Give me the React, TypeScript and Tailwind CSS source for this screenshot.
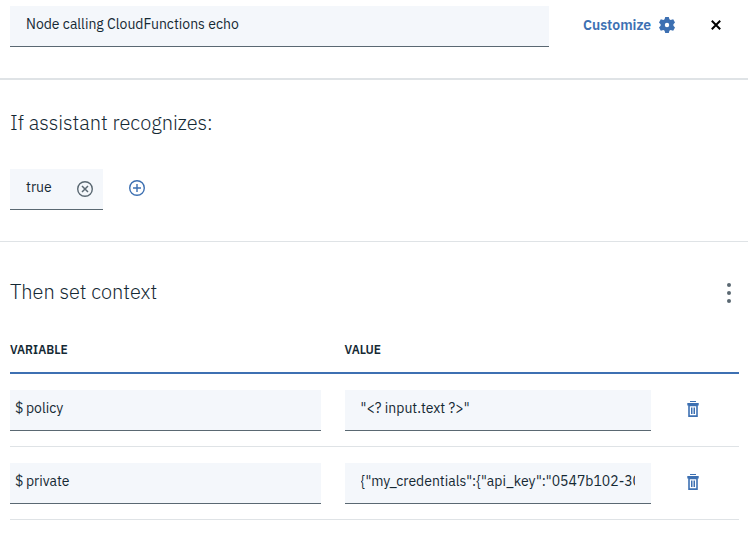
import React from "react";

const Gear = () => (
  <svg width="16" height="16" viewBox="0 0 16 16" fill="#3d70b2" className="shrink-0">
    <path
      fillRule="evenodd"
      d="M6.2 0h3.6l.6 2.3 1.2.7 2.6-.7 1.8 3.3-1.6 1.6v1.6l1.6 1.6-1.8 3.3-2.6-.7-1.2.7L9.8 16H6.2l-.6-2.3-1.2-.7-2.6.7L0 10.4l1.6-1.6V7.2L0 5.6l1.8-3.3 2.6.7 1.2-.7zM8 5.8a2.2 2.2 0 1 0 0 4.4 2.2 2.2 0 0 0 0-4.4z"
    />
  </svg>
);

const Close = () => (
  <svg width="10" height="10" viewBox="0 0 10 10" stroke="#000" strokeWidth="2" className="shrink-0">
    <path d="M.8.8l8.4 8.4M9.2.8L.8 9.2" />
  </svg>
);

const Remove = () => (
  <svg width="16" height="16" viewBox="0 0 16 16" fill="none" stroke="#5a6872" className="shrink-0">
    <circle cx="8" cy="8" r="7.3" strokeWidth="1.4" />
    <path d="M5 5l6 6M11 5l-6 6" strokeWidth="1.5" />
  </svg>
);

const Add = () => (
  <svg width="16" height="16" viewBox="0 0 16 16" fill="none" stroke="#3d70b2" className="shrink-0">
    <circle cx="8" cy="8" r="7.3" strokeWidth="1.4" />
    <path d="M8 4v8M4 8h8" strokeWidth="1.4" />
  </svg>
);

const Trash = () => (
  <svg width="12" height="16" viewBox="0 0 12 16" fill="#3d70b2" className="shrink-0">
    <path d="M3 0h6v1H3zM.3 2h11.4v2.4H.3z" />
    <path fillRule="evenodd" d="M1.2 4h9.6v12H1.2zM2.8 5.2v9h6.4v-9z" />
    <path d="M4 6.5h1.5v6.6H4zM6.5 6.5H8v6.6H6.5z" />
  </svg>
);

const Kebab = () => (
  <svg width="4" height="20" viewBox="0 0 4 20" fill="#5a6872" className="shrink-0">
    <circle cx="2" cy="2" r="2" />
    <circle cx="2" cy="10" r="2" />
    <circle cx="2" cy="18" r="2" />
  </svg>
);

const rows = [
  { name: "policy", value: '"<? input.text ?>"' },
  { name: "private", value: '{"my_credentials":{"api_key":"0547b102-30' },
];

export default function App() {
  return (
    <main className="h-[538px] w-[748px] overflow-hidden bg-white font-['IBM_Plex_Sans','Roboto','Liberation_Sans',sans-serif] text-sm leading-5 text-[#152934]">
      <header className="flex h-20 items-start border-b-2 border-[#dfe3e6] pt-1.5 pl-[10px]">
        <div className="flex h-[41px] w-[539px] items-center border-b border-[#5a6872] bg-[#f4f7fb] pb-1 pl-4">
          <span>Node calling CloudFunctions echo</span>
        </div>
        <button className="ml-[34px] flex h-[38px] w-[92px] items-center justify-between font-semibold text-[#3d70b2]">
          <span>Customize</span>
          <Gear />
        </button>
        <button className="ml-9 flex h-[38px] items-center">
          <Close />
        </button>
      </header>

      <section className="h-[162px] border-b border-[#dfe3e6] pt-[29px] pl-[10px]">
        <h2 className="h-7 text-xl leading-7 font-light">
          <span>If assistant recognizes:</span>
        </h2>
        <div className="mt-8 flex">
          <div className="flex h-[41px] w-[93px] items-center justify-between border-b border-[#5a6872] bg-[#f4f7fb] pr-[10px] pl-4">
            <span className="-mt-1">true</span>
            <Remove />
          </div>
          <button className="ml-[26px] flex h-[38px] items-center">
            <Add />
          </button>
        </div>
      </section>

      <section className="pt-9 pr-[9px] pl-[10px]">
        <div className="flex h-[30px] items-center justify-between pr-2">
          <h2 className="-mt-0.5 text-xl leading-7 font-light">
            <span>Then set context</span>
          </h2>
          <Kebab />
        </div>
        <div className="mt-8 flex h-[34px] border-b-2 border-[#3d70b2] text-xs leading-[19px] font-semibold">
          <div className="w-[334.6px]"><span>VARIABLE</span></div>
          <div><span>VALUE</span></div>
        </div>
        {rows.map((row) => (
          <div key={row.name} className="flex h-[73px] items-start border-b border-[#dfe3e6] pt-4">
            <div className="flex h-[41px] w-[311px] items-center border-b border-[#5a6872] bg-[#f4f7fb] pb-1 pl-[5px]">
              <span className="w-[11px]">$</span>
              <span>{row.name}</span>
            </div>
            <div className="ml-6 h-[41px] w-[306px] border-b border-[#5a6872] bg-[#f4f7fb] pt-2 pr-4 pl-[15.6px]">
              <div className="overflow-hidden whitespace-nowrap">
                <span>{row.value}</span>
              </div>
            </div>
            <button className="mt-[11px] ml-9">
              <Trash />
            </button>
          </div>
        ))}
      </section>
    </main>
  );
}
